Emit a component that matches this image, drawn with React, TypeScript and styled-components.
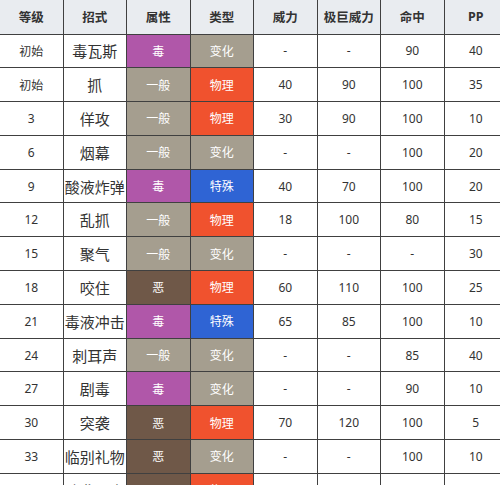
import React from 'react'
import styled, { createGlobalStyle } from 'styled-components'

const GlobalStyle = createGlobalStyle`
	html, body {
		margin: 0;
		padding: 0;
		background: #ffffff;
		overflow: hidden;
	}
	body {
		font-family: 'Noto Sans', 'Noto Sans CJK SC', sans-serif;
	}
`

const MoveTable = styled.table`
	width: 500px;
	border-collapse: collapse;
	table-layout: fixed;
	color: #333333;
	font-size: 12px;
`

const HeadRow = styled.tr`
	height: 34px;
	background: #e9ecf0;
`

const MoveRow = styled.tr`
	height: 33.8px;
`

const HeadCell = styled.th`
	width: 62.5px;
	padding: 0;
	font-size: 12.5px;
	font-weight: 700;
	color: #333333;
	text-align: center;
	border: 1px solid #404040;
	border-top: none;
	&:first-child {
		border-left: none;
	}
	&:last-child {
		border-right: none;
	}
`

const Cell = styled.td<{ $bg?: string; $big?: boolean }>`
	padding: 0;
	text-align: center;
	vertical-align: middle;
	border: 1px solid #404040;
	background: ${(p) => p.$bg ?? '#ffffff'};
	color: ${(p) => (p.$bg ? '#ffffff' : '#333333')};
	font-size: ${(p) => (p.$big ? '15px' : '12px')};
	white-space: nowrap;
	&:first-child {
		border-left: none;
	}
	&:last-child {
		border-right: none;
	}
`

const typeColors: Record<string, string> = {
	毒: '#b057a9',
	一般: '#a59e8f',
	恶: '#6f5848',
}

const kindColors: Record<string, string> = {
	变化: '#a59e8f',
	物理: '#f0522e',
	特殊: '#2f64d4',
}

const headers = ['等级', '招式', '属性', '类型', '威力', '极巨威力', '命中', 'PP']

const moves = [
	['初始', '毒瓦斯', '毒', '变化', '-', '-', '90', '40'],
	['初始', '抓', '一般', '物理', '40', '90', '100', '35'],
	['3', '佯攻', '一般', '物理', '30', '90', '100', '10'],
	['6', '烟幕', '一般', '变化', '-', '-', '100', '20'],
	['9', '酸液炸弹', '毒', '特殊', '40', '70', '100', '20'],
	['12', '乱抓', '一般', '物理', '18', '100', '80', '15'],
	['15', '聚气', '一般', '变化', '-', '-', '-', '30'],
	['18', '咬住', '恶', '物理', '60', '110', '100', '25'],
	['21', '毒液冲击', '毒', '特殊', '65', '85', '100', '10'],
	['24', '刺耳声', '一般', '变化', '-', '-', '85', '40'],
	['27', '剧毒', '毒', '变化', '-', '-', '90', '10'],
	['30', '突袭', '恶', '物理', '70', '120', '100', '5'],
	['33', '临别礼物', '恶', '变化', '-', '-', '100', '10'],
	['36', '暗袭要害', '恶', '物理', '70', '120', '100', '15'],
]

export default function App() {
	return (
		<>
			<GlobalStyle />
			<MoveTable>
				<thead>
					<HeadRow>
						{headers.map((h) => (
							<HeadCell key={h}>{h}</HeadCell>
						))}
					</HeadRow>
				</thead>
				<tbody>
					{moves.map(([lv, name, type, kind, power, maxPower, acc, pp]) => (
						<MoveRow key={name}>
							<Cell>{lv}</Cell>
							<Cell $big>{name}</Cell>
							<Cell $bg={typeColors[type]}>{type}</Cell>
							<Cell $bg={kindColors[kind]}>{kind}</Cell>
							<Cell>{power}</Cell>
							<Cell>{maxPower}</Cell>
							<Cell>{acc}</Cell>
							<Cell>{pp}</Cell>
						</MoveRow>
					))}
				</tbody>
			</MoveTable>
		</>
	)
}
